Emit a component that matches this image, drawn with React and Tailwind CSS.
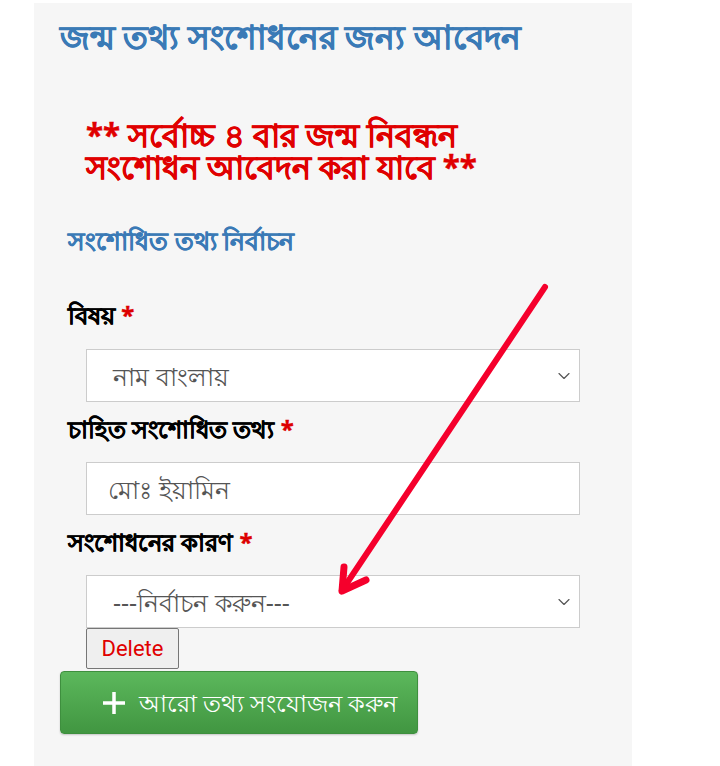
import { ChevronDown } from 'lucide-react'

function Label({ children }) {
  return (
    <div className="ml-[34px] text-[24px] font-bold text-black leading-[30px] [-webkit-text-stroke:0.4px_currentColor]">
      {children} <span className="text-[#d00]">*</span>
    </div>
  )
}

function SelectBox({ value }) {
  return (
    <div className="ml-[52px] w-[494px] h-[53px] bg-white border border-[#ccc] flex items-center justify-between pl-[26px] pr-[5px]">
      <span className="text-[25px] text-[#555] leading-[34px]">{value}</span>
      <ChevronDown className="w-[20px] h-[20px] text-[#555]" strokeWidth={1.4} />
    </div>
  )
}

export default function App() {
  return (
    <div className="relative w-[720px] h-[766px] bg-white overflow-hidden font-['Noto_Sans',sans-serif]">
      <div className="ml-[34px] mt-[3px] w-[598px] h-[763px] bg-[#f6f6f6] flex flex-col">
        <h1 className="ml-[26px] mt-[16px] text-[32.5px] font-bold text-[#3a7ab6] leading-[36px] [-webkit-text-stroke:0.5px_currentColor]">
          জন্ম তথ্য সংশোধনের জন্য আবেদন
        </h1>

        <p className="ml-[52px] mt-[64px] text-[31.5px] font-bold text-[#e00000] leading-[32px] [-webkit-text-stroke:0.4px_currentColor]">
          ** সর্বোচ্চ ৪ বার জন্ম নিবন্ধন
          <br />
          সংশোধন আবেদন করা যাবে **
        </p>

        <h2 className="ml-[34px] mt-[42px] text-[25px] font-semibold text-[#3a7ab6] leading-[30px] [-webkit-text-stroke:0.3px_currentColor]">
          সংশোধিত তথ্য নির্বাচন
        </h2>

        <div className="mt-[45px]">
          <Label>বিষয়</Label>
        </div>
        <div className="mt-[19px]">
          <SelectBox value="নাম বাংলায়" />
        </div>

        <div className="mt-[12px]">
          <Label>চাহিত সংশোধিত তথ্য</Label>
        </div>
        <div className="mt-[18px] ml-[52px] w-[494px] h-[53px] bg-white border border-[#ccc] flex items-center pl-[21px]">
          <span className="text-[25px] text-[#555] leading-[34px]">মোঃ ইয়ামিন</span>
        </div>

        <div className="mt-[12px]">
          <Label>সংশোধনের কারণ</Label>
        </div>
        <div className="mt-[18px]">
          <SelectBox value="---নির্বাচন করুন---" />
        </div>

        <button className="ml-[52px] w-[93px] h-[41px] bg-[#efefef] border border-[#767676] rounded-[2px] font-['Roboto',sans-serif] text-[22px] text-[#e00000] text-center leading-[26px]">
          Delete
        </button>

        <button className="ml-[26px] mt-[2px] w-[358px] h-[63px] rounded-[4px] border border-[#3e8f3e] bg-gradient-to-b from-[#5cb85c] to-[#419641] text-white flex items-center pl-[40px] gap-[12px] shadow-[0_1px_2px_rgba(0,0,0,0.2)]">
          <svg width="26" height="26" viewBox="0 0 26 26">
            <path d="M13 2v22M2 13h22" stroke="white" strokeWidth="3.5" />
          </svg>
          <span className="text-[23.5px] leading-[30px]">আরো তথ্য সংযোজন করুন</span>
        </button>
      </div>

      <svg className="absolute left-0 top-0 pointer-events-none" width="720" height="766">
        <path d="M545 287 L345 586" stroke="#f5002c" strokeWidth="6" strokeLinecap="round" fill="none" />
        <path d="M342 591 L344 567 M342 591 L366 580" stroke="#f5002c" strokeWidth="7" strokeLinecap="round" strokeLinejoin="round" fill="none" />
      </svg>
    </div>
  )
}
